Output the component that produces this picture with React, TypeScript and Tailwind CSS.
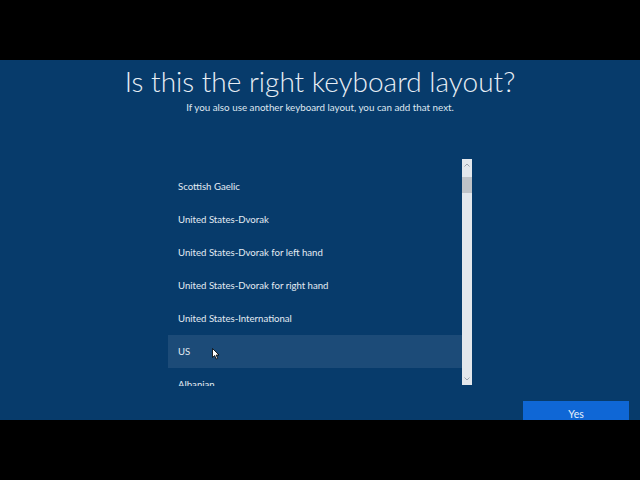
import React from "react";

const items = [
  "Scottish Gaelic",
  "United States-Dvorak",
  "United States-Dvorak for left hand",
  "United States-Dvorak for right hand",
  "United States-International",
  "US",
  "Albanian",
];

export default function App() {
  return (
    <div className="w-[640px] h-[480px] bg-black flex flex-col" style={{ fontFamily: 'Lato, "Open Sans", sans-serif' }}>
      <div className="h-[60px] shrink-0 bg-black" />
      <div className="h-[360px] shrink-0 bg-[#073b6b] overflow-hidden flex flex-col text-white">
        <h1 className="mt-[3px] text-center text-[28px] leading-[36px] font-light text-[#e8eef5]">
          Is this the right keyboard layout?
        </h1>
        <p className="text-center text-[9.8px] leading-[14px] mt-[1px] text-[#dfe7f0]">
          If you also use another keyboard layout, you can add that next.
        </p>
        <div className="mt-[45px] ml-[168px] flex">
          <div className="w-[294px] h-[227px] overflow-hidden pt-[11px]">
            {items.map((it) => (
              <div
                key={it}
                className={
                  "relative h-[33px] flex items-center pl-[10px] pt-[2px] text-[9.6px] text-[#e4ebf3] " +
                  (it === "US" ? "bg-[#1c4b78]" : "")
                }
              >
                {it}
                {it === "US" && (
                  <svg className="absolute left-[44px] top-[13px]" width="8" height="12" viewBox="0 0 8 12">
                    <path d="M0.5 0.5 L0.5 9.5 L2.7 7.5 L4.2 11 L5.6 10.4 L4.2 7 L7 7 Z" fill="#fff" stroke="#000" strokeWidth="0.8" />
                  </svg>
                )}
              </div>
            ))}
          </div>
          <div className="w-[10px] h-[226px] bg-[#e3e7ec] flex flex-col items-center">
            <svg className="mt-[4px]" width="6" height="4" viewBox="0 0 6 4">
              <path d="M0.5 3.5 L3 1 L5.5 3.5" fill="none" stroke="#9aa3ad" strokeWidth="1" />
            </svg>
            <div className="mt-[10px] w-[10px] h-[16px] bg-[#bfc3c8]" />
            <div className="flex-1" />
            <svg className="mb-[4px]" width="6" height="4" viewBox="0 0 6 4">
              <path d="M0.5 0.5 L3 3 L5.5 0.5" fill="none" stroke="#9aa3ad" strokeWidth="1" />
            </svg>
          </div>
        </div>
        <div className="mt-[15px] flex justify-end pr-[11px]">
          <button className="w-[106px] h-[32px] bg-[#0f67d6] text-[10.5px] text-[#e8f0fb] flex items-start justify-center pt-[6px]">
            Yes
          </button>
        </div>
      </div>
      <div className="h-[60px] shrink-0 bg-black" />
    </div>
  );
}
